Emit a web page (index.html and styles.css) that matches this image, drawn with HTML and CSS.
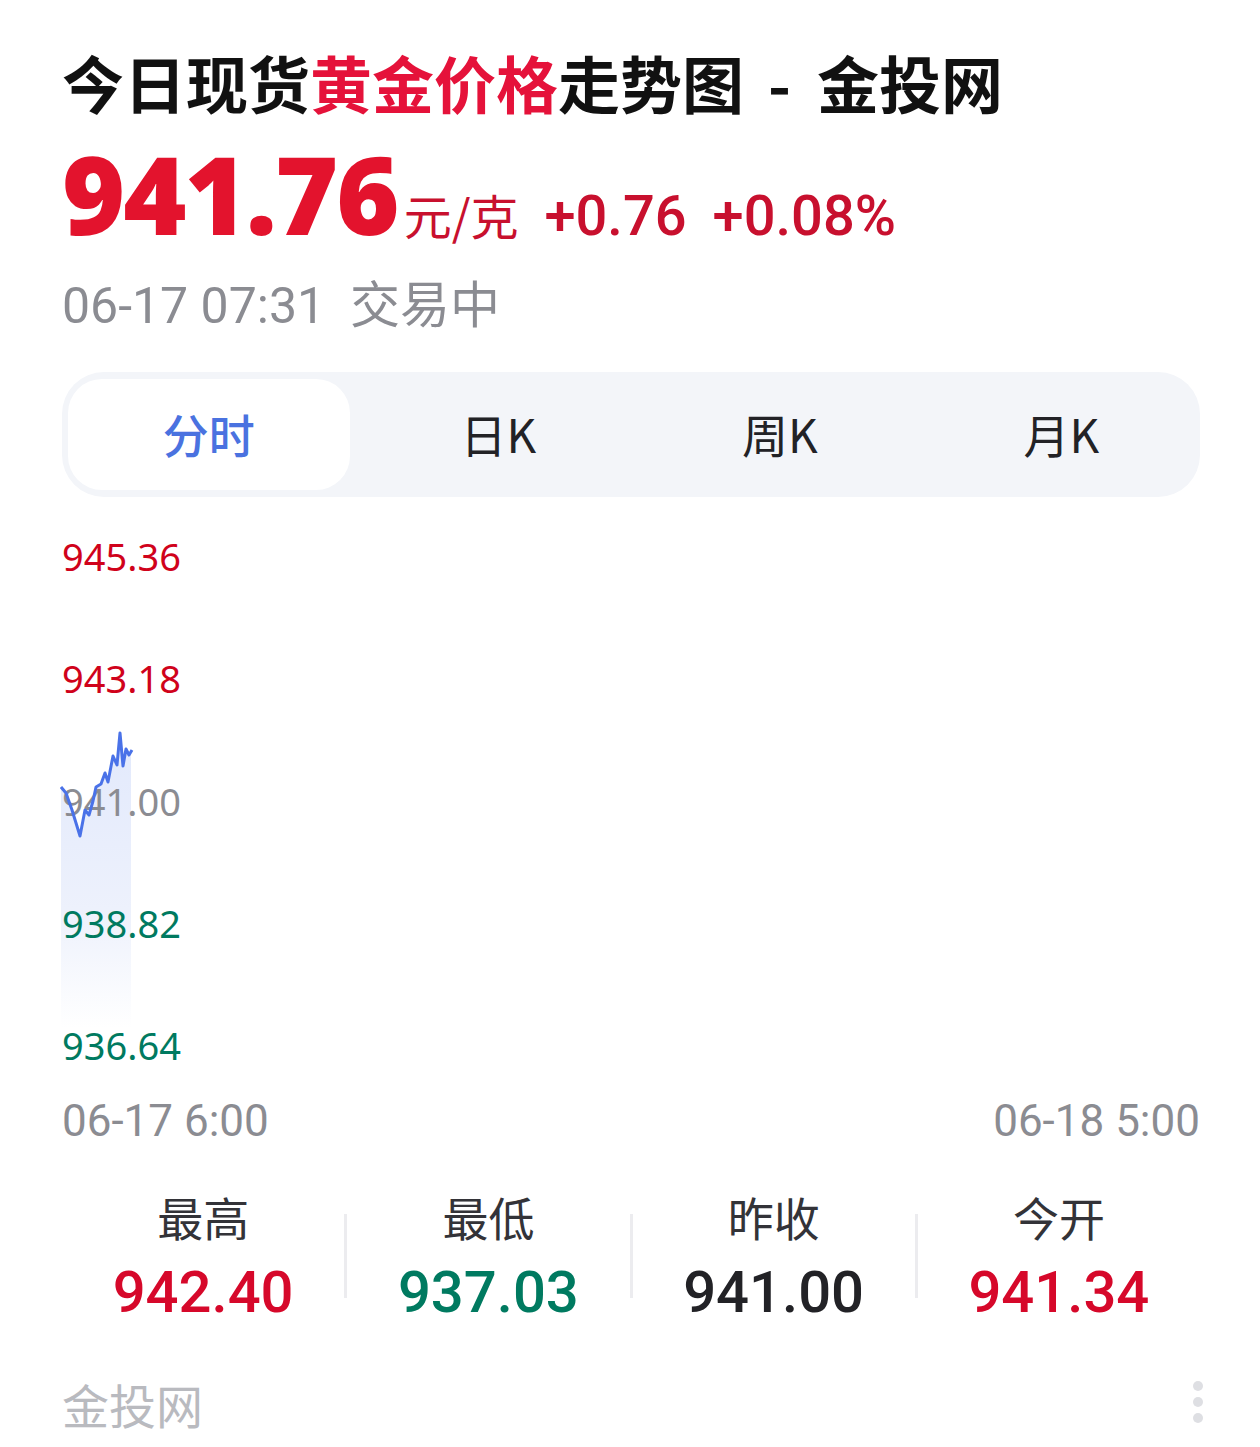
FILE: index.html
```html
<!DOCTYPE html>
<html lang="zh-CN">
<head>
    <meta charset="UTF-8">
    <meta name="viewport" content="width=device-width, initial-scale=1">
    <link rel="stylesheet" href="styles.css">
    <title>今日现货黄金价格走势图 - 金投网</title>
</head>
<body>
<div class="page">
    <h1 class="title">今日现货<span class="hl">黄金价格</span>走势图<span class="dash">-</span>金投网</h1>

    <div class="price-row">
        <span class="price">941.76</span>
        <span class="unit">元/克</span>
        <span class="change">+0.76</span>
        <span class="change">+0.08%</span>
    </div>
    <div class="status">06-17 07:31&nbsp; 交易中</div>

    <div class="tabs">
        <div class="tab active">分时</div>
        <div class="tab">日K</div>
        <div class="tab">周K</div>
        <div class="tab">月K</div>
    </div>

    <div class="chart">
        <!-- area under the intraday line sits behind the labels -->
        <svg class="area" width="74" height="340" viewBox="0 0 74 340">
            <defs>
                <linearGradient id="fill" x1="0" y1="0" x2="0" y2="1">
                    <stop offset="0" stop-color="#e2e9fc"/>
                    <stop offset="0.6" stop-color="#edf1fc"/>
                    <stop offset="1" stop-color="#ffffff"/>
                </linearGradient>
            </defs>
            <path d="M1 89 L6 95 L12 112 L20 138 L25 112 L29 117 L33 103 L36 89 L41 86 L45 75 L48 84 L53 58 L57 67 L60 35 L63 68 L66 51 L69 57 L71 53 L71 330 L1 330 Z" fill="url(#fill)"/>
        </svg>
        <div class="axis">
            <div class="tick up">945.36</div>
            <div class="tick up">943.18</div>
            <div class="tick flat">941.00</div>
            <div class="tick down">938.82</div>
            <div class="tick down">936.64</div>
        </div>
        <svg class="line" width="74" height="340" viewBox="0 0 74 340">
            <path d="M1 89 L6 95 L12 112 L20 138 L25 112 L29 117 L33 103 L36 89 L41 86 L45 75 L48 84 L53 58 L57 67 L60 35 L63 68 L66 51 L69 57 L72 52" fill="none" stroke="#4a72e8" stroke-width="3" stroke-linejoin="round"/>
        </svg>
    </div>

    <div class="xaxis">
        <span>06-17 6:00</span>
        <span>06-18 5:00</span>
    </div>

    <div class="stats">
        <div class="stat">
            <div class="stat-label">最高</div>
            <div class="stat-value up">942.40</div>
        </div>
        <div class="divider"></div>
        <div class="stat">
            <div class="stat-label">最低</div>
            <div class="stat-value down">937.03</div>
        </div>
        <div class="divider"></div>
        <div class="stat">
            <div class="stat-label">昨收</div>
            <div class="stat-value">941.00</div>
        </div>
        <div class="divider"></div>
        <div class="stat">
            <div class="stat-label">今开</div>
            <div class="stat-value up">941.34</div>
        </div>
    </div>

    <div class="footer">
        <span class="brand">金投网</span>
        <span class="more"><i></i><i></i><i></i></span>
    </div>
</div>
</body>
</html>
```

FILE: styles.css
```css
body {
    margin: 0;
    background: #ffffff;
    font-family: "Noto Sans", "Noto Sans CJK SC", sans-serif;
    color: #222226;
}
.page {
    padding: 45px 60px 0 62px;
}
.title {
    margin: 0;
    height: 74px;
    line-height: 74px;
    font-size: 62px;
    font-weight: 700;
    font-family: "Noto Sans CJK SC", sans-serif;
    color: #111111;
    white-space: nowrap;
}
.title .hl {
    color: #e5123a;
}
.title .dash {
    margin: 0 26px 0 24px;
}
.price-row {
    display: flex;
    align-items: baseline;
    margin-top: 21px;
    height: 108px;
    line-height: 108px;
    color: #e3132d;
}
.price {
    font-family: "Open Sans", sans-serif;
    font-weight: 800;
    font-size: 108px;
    letter-spacing: -2px;
}
.unit {
    font-family: "Noto Sans CJK SC", sans-serif;
    font-size: 48px;
    color: #c8102e;
    margin-left: 6px;
}
.change {
    font-family: "Roboto", sans-serif;
    font-size: 56px;
    font-weight: 500;
    color: #c8102e;
    margin-left: 26px;
}
.status {
    margin-top: 28px;
    height: 60px;
    line-height: 60px;
    font-family: "Roboto", "Noto Sans CJK SC", sans-serif;
    font-size: 50px;
    color: #8b8c92;
}
.tabs {
    margin-top: 36px;
    display: grid;
    grid-template-columns: repeat(4, 1fr);
    padding: 7px 6px;
    height: 111px;
    background: #f3f5f9;
    border-radius: 42px;
}
.tab {
    display: flex;
    align-items: center;
    justify-content: center;
    padding-left: 16px;
    padding-bottom: 4px;
    font-size: 46px;
    font-family: "Noto Sans CJK SC", sans-serif;
    color: #222226;
}
.tab.active {
    padding-left: 0;
    background: #ffffff;
    color: #4a72e0;
    font-weight: 500;
    border-radius: 34px;
}
.chart {
    position: relative;
    margin-top: 34px;
    height: 539px;
}
.axis {
    position: relative;
    z-index: 1;
    display: flex;
    flex-direction: column;
    justify-content: space-between;
    height: 100%;
}
.tick {
    height: 50px;
    line-height: 50px;
    font-size: 38px;
}
.up { color: #d0021b; }
.down { color: #007a60; }
.flat { color: #8b8c92; }
.area,
.line {
    position: absolute;
    left: -2px;
    top: 167px;
}
.area { z-index: 0; }
.line { z-index: 2; }
.xaxis {
    margin-top: 26px;
    display: flex;
    justify-content: space-between;
    height: 50px;
    line-height: 50px;
    font-family: "Roboto", sans-serif;
    font-size: 44px;
    color: #8b8c92;
}
.stats {
    margin-top: 40px;
    display: flex;
    align-items: flex-start;
}
.stat {
    flex: 1;
    text-align: center;
}
.stat-label {
    height: 60px;
    line-height: 60px;
    font-size: 46px;
    font-family: "Noto Sans CJK SC", sans-serif;
    color: #333338;
}
.stat-value {
    margin-top: 11px;
    height: 70px;
    line-height: 70px;
    font-family: "Roboto", sans-serif;
    font-size: 58px;
    font-weight: 500;
    color: #222226;
}
.stat-value.up { color: #d6082a; }
.stat-value.down { color: #007a60; }
.divider {
    width: 3px;
    height: 84px;
    margin-top: 28px;
    background: #ececef;
}
.footer {
    margin-top: 48px;
    display: flex;
    justify-content: space-between;
    align-items: center;
    height: 56px;
}
.brand {
    font-family: "Noto Sans CJK SC", sans-serif;
    font-size: 47px;
    color: #b9babf;
}
.more {
    display: flex;
    flex-direction: column;
    gap: 6px;
    margin-right: -3px;
    margin-top: -2px;
}
.more i {
    display: block;
    width: 10px;
    height: 10px;
    border-radius: 50%;
    background: #dedfe3;
}
```
